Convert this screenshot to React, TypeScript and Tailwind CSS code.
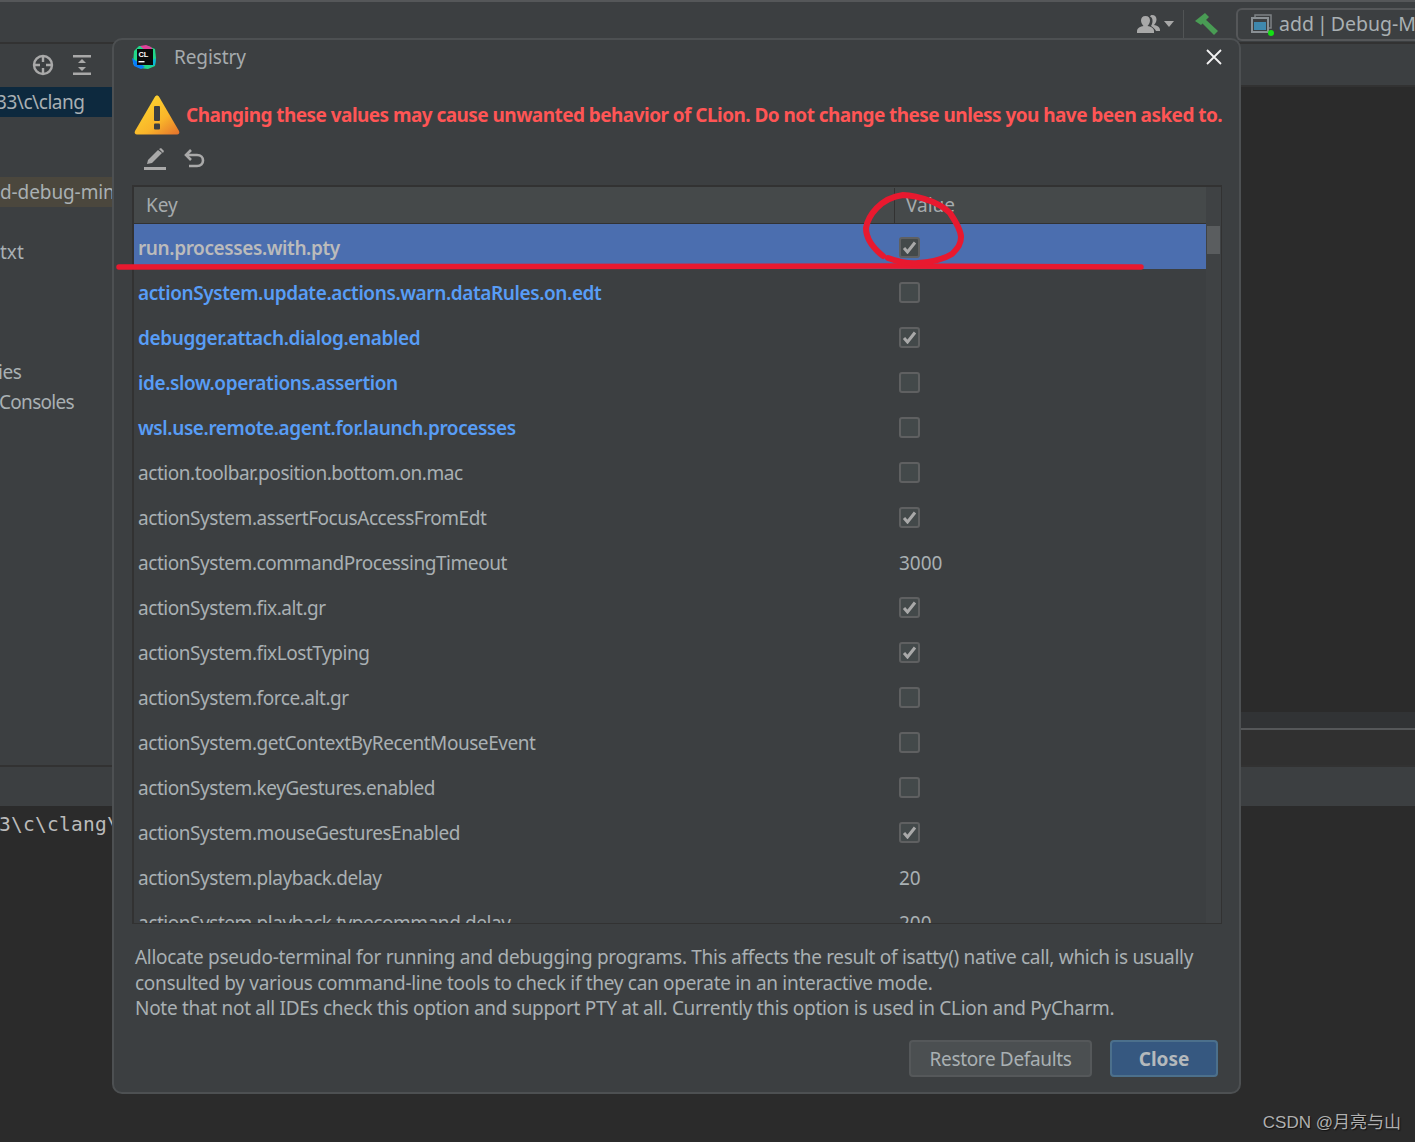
const sans = "font-['Noto_Sans',sans-serif]";

type Row = { key: string; value?: string; checked?: boolean; changed?: boolean; selected?: boolean };

const rows: Row[] = [
  { key: "run.processes.with.pty", checked: true, changed: true, selected: true },
  { key: "actionSystem.update.actions.warn.dataRules.on.edt", checked: false, changed: true },
  { key: "debugger.attach.dialog.enabled", checked: true, changed: true },
  { key: "ide.slow.operations.assertion", checked: false, changed: true },
  { key: "wsl.use.remote.agent.for.launch.processes", checked: false, changed: true },
  { key: "action.toolbar.position.bottom.on.mac", checked: false },
  { key: "actionSystem.assertFocusAccessFromEdt", checked: true },
  { key: "actionSystem.commandProcessingTimeout", value: "3000" },
  { key: "actionSystem.fix.alt.gr", checked: true },
  { key: "actionSystem.fixLostTyping", checked: true },
  { key: "actionSystem.force.alt.gr", checked: false },
  { key: "actionSystem.getContextByRecentMouseEvent", checked: false },
  { key: "actionSystem.keyGestures.enabled", checked: false },
  { key: "actionSystem.mouseGesturesEnabled", checked: true },
  { key: "actionSystem.playback.delay", value: "20" },
  { key: "actionSystem.playback.typecommand.delay", value: "200" },
];

const treeRows = [
  { text: "33\\c\\clang", cls: "bg-[#0d293e]", inner: "-ml-[4px]" },
  { text: "" },
  { text: "" },
  { text: "d-debug-minGW", cls: "bg-[#4b473d]", inner: "tracking-[-0.1px]" },
  { text: "" },
  { text: "txt", inner: "tracking-[0px]" },
  { text: "" },
  { text: "" },
  { text: "" },
  { text: "ies", inner: "-ml-[2px]" },
  { text: "Consoles", inner: "-ml-[1px] tracking-[-0.7px]" },
];

function Checkbox({ checked }: { checked: boolean }) {
  return (
    <div className="w-[21px] h-[21px] mt-[1px] rounded-[3px] border-2 border-[#5f6061] bg-[#43494a] flex items-center justify-center">
      {checked && (
        <svg width="15" height="13" viewBox="0 0 15 13" fill="none">
          <path d="M2 7l3.500 4L13 1.500" stroke="#a9a9a9" strokeWidth="3" />
        </svg>
      )}
    </div>
  );
}

function ClionLogo() {
  return (
    <svg width="25" height="25" viewBox="0 0 25 25" className="shrink-0">
      <path d="M2 6l5-5 9 0 7 3 1 9-1 8-7 3-9-1-6-4z" fill="#21d789" />
      <path d="M8 1l6-1 5 2 2 3-7 1z" fill="#e0409a" />
      <path d="M0 13l2 8 7 3 4-2-6-4z" fill="#087cfa" />
      <path d="M18 21l5-1 1-7-3 2z" fill="#09b5d8" />
      <rect x="5" y="4" width="16" height="16" fill="#0a0a0a" />
      <text x="6.500" y="11.500" fill="#fff" fontSize="7.500" fontWeight="700" fontFamily="Liberation Sans, sans-serif">CL</text>
      <rect x="6.500" y="16" width="6" height="1.400" fill="#fff" />
    </svg>
  );
}

function WarningIcon() {
  return (
    <svg width="46" height="42" viewBox="0 0 46 42" className="shrink-0">
      <defs>
        <linearGradient id="warn" x1="0.2" y1="0.1" x2="1" y2="1">
          <stop offset="0" stopColor="#fdd52f" />
          <stop offset="0.55" stopColor="#f9b52a" />
          <stop offset="1" stopColor="#e4702c" />
        </linearGradient>
      </defs>
      <path d="M23 1.500c1 0 1.600.5 2.200 1.500L45 37c1 2-.2 3.500-2 3.500H3c-1.800 0-3-1.500-2-3.500L20.800 3c.6-1 1.200-1.500 2.200-1.500z" fill="url(#warn)" />
      <rect x="20" y="12" width="6" height="15" rx="1" fill="#3c3f41" />
      <rect x="20" y="29.500" width="6" height="6" rx="1" fill="#3c3f41" />
    </svg>
  );
}

function Annotation() {
  return (
    <svg className="absolute left-0 top-0 pointer-events-none" width="1415" height="1142" fill="none">
      <path d="M119 267 L885 266 L1141 267" stroke="#e8192f" strokeWidth="5.500" strokeLinecap="round" />
      <path
        d="M883 256 C873 248 866 238 866 228 C868 216 880 198 903 195 C915 195 925 199 933 202 C942 206 946 209 950 213 C956 222 961 230 961 237 C961 244 958 248 952 254 C944 259 932 262 918 263 C906 264 896 261 888 258"
        stroke="#e8192f"
        strokeWidth="6"
        strokeLinecap="round"
      />
    </svg>
  );
}

export default function App() {
  return (
    <div className={`relative w-[1415px] h-[1142px] overflow-hidden flex flex-col bg-[#2b2b2b] text-[#a9b0b3] ${sans}`}>
      {/* top toolbar */}
      <div className="h-[44px] shrink-0 bg-[#3c3f41] border-t-2 border-[#555759] border-b-2 border-b-[#323232] pt-[4px] flex items-center justify-end">
        <svg width="24" height="20" viewBox="0 0 24 20" className="mr-[3px]" fill="#a8a8a8">
          <path d="M15 1c3 0 4.500 2 4.500 4.500S18 10 17 11c3 .5 6 2 6 5v1h-4c-1-2-3-4-5-5 1-2 1.500-3 1.500-5S15 3 13 2.500C13.500 1.500 14 1 15 1z" />
          <path d="M8.500 2c3 0 4.500 2 4.500 4.500S11.500 11 10.500 12c3 .5 6.500 2 6.500 5v2H0v-2c0-3 3.500-4.500 6.500-5C5.500 11 4 9 4 6.500S5.500 2 8.500 2z" />
        </svg>
        <div className="w-0 h-0 border-x-[5px] border-x-transparent border-t-[6px] border-t-[#a8a8a8] mr-[9px]" />
        <div className="w-px h-[28px] bg-[#515455] mr-[11px]" />
        <svg width="24" height="24" viewBox="0 0 24 24" className="mr-[17px]" fill="#499c54">
          <path d="M0 9L10 1l4 4-6 6-2 2z" />
          <path d="M9 6l14 13-4 4L6 10z" />
        </svg>
        <div className="w-[179px] h-[33px] shrink-0 rounded-l-[6px] border-2 border-r-0 border-[#555759] flex items-center pl-[13px] whitespace-nowrap overflow-hidden text-[19.500px] [word-spacing:-2px]">
          <div className="relative mr-[7px] shrink-0">
            <svg width="21" height="20" viewBox="0 0 21 20" fill="none">
              <rect x="4" y="1" width="16" height="13" stroke="#7d8285" strokeWidth="1.500" />
              <rect x="1" y="4" width="16" height="14" fill="#3c3f41" stroke="#8a9094" strokeWidth="2" />
              <rect x="3" y="8" width="12" height="8" fill="#3f88ad" />
            </svg>
            <div className="absolute right-[-2px] bottom-[-2px] w-[6px] h-[6px] rounded-full bg-[#14e014]" />
          </div>
          add | Debug-MinGW
        </div>
      </div>

      {/* tool windows */}
      <div className="flex-1 flex min-h-0">
        <div className="w-[600px] shrink-0 bg-[#3c3f41] flex flex-col">
          <div className="h-[41px] shrink-0 flex items-center pl-[32px] gap-[18px] text-[#a9a9a9]">
            <svg width="22" height="22" viewBox="0 0 22 22" fill="none" stroke="#a9a9a9" strokeWidth="2.400">
              <circle cx="11" cy="11" r="9" />
              <path d="M11 2v6M11 14v6M2 11h6M14 11h6" />
            </svg>
            <svg width="20" height="22" viewBox="0 0 20 22" fill="#a9a9a9">
              <rect x="1" y="1" width="18" height="2.500" />
              <rect x="1" y="18.500" width="18" height="2.500" />
              <path d="M10 5l4 4H6zM10 17l-4-4h8z" />
            </svg>
          </div>
          <div className="h-[2px] shrink-0" />
          {treeRows.map((row, i) => (
            <div
              key={i}
              className={`h-[30px] shrink-0 flex items-center whitespace-nowrap overflow-hidden text-[19px] leading-[30px] tracking-[-0.45px] ${row.cls ?? ""}`}
            >
              <span className={row.inner ?? ""}>{row.text}</span>
            </div>
          ))}
        </div>
        <div className="flex-1 flex flex-col min-w-0">
          <div className="h-[43px] shrink-0 bg-[#3c3f41] border-b-2 border-[#323232]" />
          <div className="flex-1 bg-[#2b2b2b]" />
          <div className="h-[16px] shrink-0 bg-[#313335]" />
          <div className="h-[2px] shrink-0 bg-[#555759]" />
          <div className="h-[35px] shrink-0 bg-[#303030]" />
        </div>
      </div>

      {/* bottom panel */}
      <div className="h-[41px] shrink-0 bg-[#3c3f41] border-t-2 border-[#323232]" />
      <div className="h-[336px] shrink-0 bg-[#2b2b2b] font-['DejaVu_Sans_Mono',monospace] text-[19.500px] text-[#bbbbbb] whitespace-nowrap overflow-hidden pt-[5px] leading-[28px] -indent-[1px] tracking-[0.25px]">
        3\c\clang\
      </div>

      {/* Registry dialog */}
      <div className="absolute left-[112px] top-[38px] w-[1129px] h-[1056px] rounded-[10px] border-2 border-[#4d5052] bg-[#3c3f41] flex flex-col">
        <div className="h-[34px] shrink-0 flex items-center pl-[18px] pr-[15px] text-[19px] text-[#a6abad] tracking-[-0.1px]">
          <ClionLogo />
          <span className="ml-[17px]">Registry</span>
          <svg width="20" height="20" viewBox="0 0 20 20" className="ml-auto" stroke="#f2f2f2" strokeWidth="1.800">
            <path d="M3 3l14 14M17 3L3 17" />
          </svg>
        </div>
        <div className="h-[42px] mt-[20px] shrink-0 flex items-center pl-[20px]">
          <WarningIcon />
          <span className="ml-[6px] text-[#ff5555] font-bold text-[19px] whitespace-nowrap tracking-[-0.55px]">
            Changing these values may cause unwanted behavior of CLion. Do not change these unless you have been asked to.
          </span>
        </div>
        <div className="h-[24px] mt-[11px] shrink-0 flex items-center pl-[29px] gap-[17px]">
          <svg width="24" height="24" viewBox="0 0 24 24" fill="#a9a9a9">
            <path d="M4 17l1-4L15 3l4 3L9 16z" />
            <path d="M16 2l2-1 3 3-1 2z" />
            <rect x="1" y="20" width="22" height="3" />
          </svg>
          <svg width="22" height="20" viewBox="0 0 22 20" fill="none" stroke="#a9a9a9" strokeWidth="2.600">
            <path d="M7 1L2 6l5 5" />
            <path d="M2 6h11c4 0 6 2.500 6 5.500S17 17 13 17H5" />
          </svg>
        </div>

        {/* table */}
        <div className="ml-[18px] mr-[17px] mt-[14px] h-[739px] shrink-0 border-2 border-r border-b border-[#323232] overflow-hidden relative">
          <div className="h-[37px] pt-[1px] flex bg-[#45494a] border-b border-[#323232] mr-[15px] text-[19px] text-[#a6abad]">
            <div className="w-[760px] shrink-0 pl-[12px] flex items-center">Key</div>
            <div className="flex-1 pl-[11px] flex items-center border-l border-[#323232]">Value</div>
          </div>
          <div className="absolute right-0 top-0 bottom-0 w-[15px] bg-[#3f4244]">
            <div className="mt-[39px] mx-[1px] h-[28px] bg-[#5a5d5f]" />
          </div>
          {rows.map((row) => (
            <div
              key={row.key}
              className={`h-[45px] flex items-center mr-[15px] text-[19px] whitespace-nowrap ${row.selected ? "bg-[#4b6eaf]" : ""}`}
            >
              <div
                className={`w-[765px] shrink-0 pl-[4px] pt-[3px] ${row.changed ? "font-semibold tracking-[-0.4px]" : "tracking-[-0.45px]"} ${
                  row.selected ? "text-[#bbbbbb]" : row.changed ? "text-[#589df6]" : "text-[#a9b0b3]"
                }`}
              >
                {row.key}
              </div>
              {row.value ? (
                <span className="text-[#a9b0b3] pt-[3px]">{row.value}</span>
              ) : (
                <Checkbox checked={!!row.checked} />
              )}
            </div>
          ))}
        </div>

        {/* description */}
        <div className="ml-[21px] mt-[21px] text-[19px] leading-[25.500px] text-[#a9b0b3] tracking-[-0.3px] whitespace-nowrap">
          <p>Allocate pseudo-terminal for running and debugging programs. This affects the result of isatty() native call, which is usually</p>
          <p>consulted by various command-line tools to check if they can operate in an interactive mode.</p>
          <p>Note that not all IDEs check this option and support PTY at all. Currently this option is used in CLion and PyCharm.</p>
        </div>

        <div className="mt-auto mb-[15px] flex justify-end gap-[18px] pr-[21px] text-[19px]">
          <button className="w-[183px] h-[37px] pt-[2px] rounded-[4px] border-2 border-[#55585a] bg-[#4b4f51] text-[#a9b0b3] tracking-[-0.35px]">
            Restore Defaults
          </button>
          <button className="w-[108px] h-[37px] pt-[2px] rounded-[4px] border-2 border-[#4c708c] bg-[#365880] font-bold text-[#b4b9bc]">
            Close
          </button>
        </div>
      </div>

      <Annotation />

      {/* watermark */}
      <div className="absolute right-[14px] bottom-[7px] font-['Liberation_Sans','Noto_Sans_CJK_SC',sans-serif] text-[17px] text-[#b0b0b0] [text-shadow:1px_1px_1px_#111]">
        CSDN @月亮与山
      </div>
    </div>
  );
}
